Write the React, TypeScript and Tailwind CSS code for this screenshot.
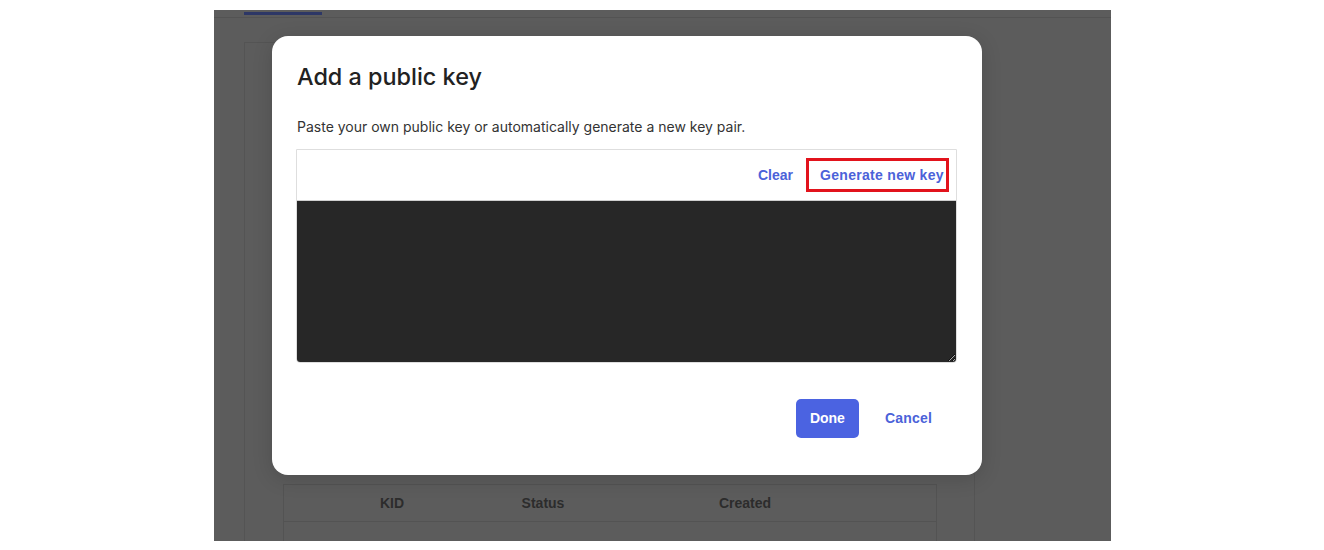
export default function App() {
  return (
    <div className="min-h-screen bg-white pt-[10px] font-['Liberation_Sans',Arial,sans-serif]">
      {/* dimmed page behind the dialog */}
      <div className="relative ml-[214px] h-[531px] w-[897px] overflow-hidden bg-[#5c5c5c]">
        <div className="h-[6px] border-b border-[#535353]">
          <div className="ml-[30px] mt-[2px] h-[3px] w-[78px] bg-[#2d3766]" />
        </div>

        <div className="ml-[30px] mt-[24px] h-[520px] w-[731px] border border-[#545454] pl-[38px] pt-[441px]">
          <div className="h-[200px] w-[654px] border-x border-[#535353]">
            <div className="flex h-[38px] items-center border-y border-[#535353] text-[14px] font-bold text-[#2c2c2c]">
              <div className="w-[216px] text-center">KID</div>
              <div className="w-[86px] text-center">Status</div>
              <div className="w-[318px] text-center">Created</div>
            </div>
          </div>
        </div>

        {/* dialog */}
        <div className="absolute left-[58px] top-[26px] h-[439px] w-[710px] rounded-[16px] bg-white px-[24px] pt-[25px] shadow-[0_4px_20px_rgba(0,0,0,0.15)]">
          <h2 className="ml-[1px] font-['Inter',sans-serif] text-[23.4px] leading-[32px] font-medium text-[#222]">
            Add a public key
          </h2>
          <p className="ml-[1px] mt-[24px] font-['Inter',sans-serif] text-[14px] leading-[20px] text-[#333]">
            Paste your own public key or automatically generate a new key pair.
          </p>

          <div className="mt-[12px] w-[661px] rounded-b-[4px] border border-[#dedede]">
            <div className="flex h-[51px] items-center justify-end gap-[13px] border-b border-[#cfcfcf] pr-[7px]">
              <button className="text-[14px] font-bold text-[#4b62d9]">Clear</button>
              <div className="flex h-[34px] w-[143px] items-center border-[3px] border-[#e2131c] pl-[11px]">
                <button className="whitespace-nowrap text-[14px] font-bold tracking-[0.3px] text-[#4b62d9]">
                  Generate new key
                </button>
              </div>
            </div>
            <textarea className="block h-[161px] w-full resize-y rounded-b-[3px] border-0 bg-[#272727] p-2 text-white outline-none" />
          </div>

          <div className="mt-[36px] flex items-center justify-end gap-[26px] pr-[26px]">
            <button className="h-[39px] w-[63px] rounded-[5px] bg-[#4b63e1] text-[14px] font-bold text-white">
              Done
            </button>
            <button className="text-[14px] font-bold tracking-[0.2px] text-[#4b62d9]">Cancel</button>
          </div>
        </div>
      </div>
    </div>
  )
}
